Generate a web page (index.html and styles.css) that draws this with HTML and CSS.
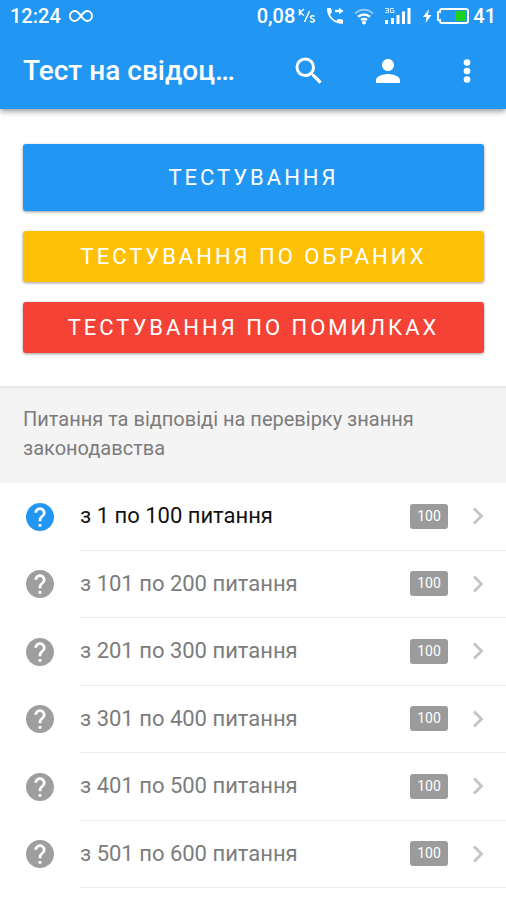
FILE: index.html
```html
<!DOCTYPE html>
<html lang="uk">
<head>
<meta charset="utf-8">
<meta name="viewport" content="width=device-width, initial-scale=1">
<title>Тест</title>
<link rel="stylesheet" href="styles.css">
</head>
<body>
<svg class="sprite">
  <symbol id="help" viewBox="2 2 20 20"><path d="M12 2C6.480 2 2 6.480 2 12s4.480 10 10 10 10-4.480 10-10S17.520 2 12 2zm1 17h-2v-2h2v2zm2.070-7.750l-.9.920C13.450 12.900 13 13.500 13 15h-2v-.5c0-1.100.45-2.100 1.170-2.830l1.240-1.260c.37-.36.59-.86.59-1.410 0-1.100-.9-2-2-2s-2 .9-2 2H8c0-2.210 1.790-4 4-4s4 1.790 4 4c0 .88-.36 1.680-.93 2.250z"/></symbol>
  <symbol id="chevron" viewBox="0 0 12 18"><path d="M2 1.500 9.500 9 2 16.500" fill="none" stroke="currentColor" stroke-width="2.800"/></symbol>
</svg>
<header class="top">
  <div class="status">
    <span class="clock">12:24</span>
    <svg class="infinity" viewBox="0 0 24 14"><path d="M12 7C9.500 3.500 8 2 5.800 2a4.800 5 0 0 0 0 10C8 12 9.500 10.500 12 7s4-5 6.200-5a4.800 5 0 0 1 0 10C16 12 14.500 10.500 12 7z" fill="none" stroke="currentColor" stroke-width="2"/></svg>
    <span class="speed">0,08</span>
    <svg class="unit" viewBox="0 0 18 16"><path d="M1.500 1v6.500M6 1 2 4.500l4 3M11.500 3 6.500 14M16.500 8.500c-1-1-4-1-4 .8 0 2 4 1.200 4 3.200 0 1.900-3.300 1.900-4.400.6" fill="none" stroke="currentColor" stroke-width="1.500"/></svg>
    <svg class="call" viewBox="0 0 18 18"><path d="M1 2C1 1.300 1.300 1 2 1h2.300c.5 0 .9.300 1 .9l.5 3c.1.500-.1.800-.4 1.100L4 7.500c1.200 2.700 3.500 5 6.300 6.300l1.700-1.500c.3-.3.700-.4 1.100-.3l3 .6c.6.100.9.500.9 1v2.300c0 .6-.4.900-1 .9C8 17 1 10 1 2z"/><path d="M9 4h5" fill="none" stroke="currentColor" stroke-width="2.400"/><path d="M13 .8 17.500 4 13 7.200z"/></svg>
    <svg class="wifi" viewBox="0 0 20 18"><path d="M1 6.500c5.500-5 12.500-5 18 0" fill="none" stroke="currentColor" stroke-width="2" opacity=".5"/><path d="M4 9.800c4-3.200 8-3.200 12 0M7 13c2-1.500 4-1.500 6 0" fill="none" stroke="currentColor" stroke-width="2.400"/><circle cx="10" cy="15.500" r="2"/></svg>
    <svg class="signal" viewBox="0 0 27 18"><path d="M1 13h3v4H1zM7 11h3v6H7zM12.500 8h3v9h-3zM18 4.500h3V17h-3zM23.500 1h3v16h-3z"/><path d="M1 1.500h3.500v4H1M2 3.500h2.500M10 1.500H6.500v4H10v-2H8.500" fill="none" stroke="currentColor" opacity=".8"/></svg>
    <svg class="battery" viewBox="0 0 46 18"><path d="M6 2 0 10h3.500L2.500 16l6-8H5z"/><path d="M19 2h24a2 2 0 0 1 2 2v10a2 2 0 0 1-2 2H19a2 2 0 0 1-2-2v-1h-2V5h2V4a2 2 0 0 1 2-2z" fill="none" stroke="currentColor" stroke-width="2"/><path class="charge" d="M32 4h11v10H32z"/></svg>
    <span>41</span>
  </div>
  <div class="toolbar">
    <h1>Тест на свідоц…</h1>
    <button aria-label="Пошук"><svg viewBox="2 2 20 20"><path d="M15.500 14h-.79l-.28-.27A6.471 6.471 0 0 0 16 9.500 6.500 6.500 0 1 0 9.500 16c1.610 0 3.090-.59 4.230-1.570l.27.28v.79l5 4.990L20.490 19l-4.990-5zm-6 0C7.010 14 5 11.990 5 9.500S7.010 5 9.500 5 14 7.010 14 9.500 11.990 14 9.500 14z"/></svg></button>
    <button aria-label="Профіль"><svg viewBox="2 2 20 20"><path d="M12 12c2.210 0 4-1.790 4-4s-1.790-4-4-4-4 1.790-4 4 1.790 4 4 4zm0 2c-2.670 0-8 1.340-8 4v2h16v-2c0-2.660-5.330-4-8-4z"/></svg></button>
    <button aria-label="Меню"><svg viewBox="2 2 20 20"><circle cx="12" cy="6.300" r="2.200"/><circle cx="12" cy="12" r="2.200"/><circle cx="12" cy="17.700" r="2.200"/></svg></button>
  </div>
</header>
<main>
  <div class="actions">
    <button class="action primary">ТЕСТУВАННЯ</button>
    <button class="action chosen">ТЕСТУВАННЯ ПО ОБРАНИХ</button>
    <button class="action mistakes">ТЕСТУВАННЯ ПО ПОМИЛКАХ</button>
  </div>
  <h2>Питання та відповіді на перевірку знання законодавства</h2>
  <ul class="list">
    <li><a class="current" href="#1"><svg class="help"><use href="#help"/></svg><span class="body"><span class="name">з 1 по 100 питання</span><span class="badge">100</span><svg class="chevron"><use href="#chevron"/></svg></span></a></li>
    <li><a href="#101"><svg class="help"><use href="#help"/></svg><span class="body"><span class="name">з 101 по 200 питання</span><span class="badge">100</span><svg class="chevron"><use href="#chevron"/></svg></span></a></li>
    <li><a href="#201"><svg class="help"><use href="#help"/></svg><span class="body"><span class="name">з 201 по 300 питання</span><span class="badge">100</span><svg class="chevron"><use href="#chevron"/></svg></span></a></li>
    <li><a href="#301"><svg class="help"><use href="#help"/></svg><span class="body"><span class="name">з 301 по 400 питання</span><span class="badge">100</span><svg class="chevron"><use href="#chevron"/></svg></span></a></li>
    <li><a href="#401"><svg class="help"><use href="#help"/></svg><span class="body"><span class="name">з 401 по 500 питання</span><span class="badge">100</span><svg class="chevron"><use href="#chevron"/></svg></span></a></li>
    <li><a href="#501"><svg class="help"><use href="#help"/></svg><span class="body"><span class="name">з 501 по 600 питання</span><span class="badge">100</span><svg class="chevron"><use href="#chevron"/></svg></span></a></li>
  </ul>
</main>
</body>
</html>
```
FILE: styles.css
```css
* { box-sizing: border-box; }
body {
  margin: 0;
  background: #fff;
  color: #7c7c7c;
  font-family: Roboto, "Liberation Sans", sans-serif;
}
svg { flex: none; fill: currentColor; }
button { border: 0; font: inherit; color: inherit; cursor: pointer; }
.sprite { display: none; }

.top {
  background: #2196f3;
  color: #fff;
  box-shadow: 0 2px 6px rgba(0, 0, 0, .45);
}
.status {
  display: flex;
  align-items: center;
  height: 32px;
  padding: 0 10px;
  font-size: 20px;
  font-weight: 500;
}
.infinity { width: 24px; height: 14px; margin-left: 8px; }
.speed { margin-left: auto; }
.unit { width: 18px; height: 16px; margin-left: 3px; }
.call { width: 18px; height: 18px; margin-left: 10px; }
.wifi { width: 20px; height: 18px; margin-left: 10px; }
.signal { width: 27px; height: 18px; margin-left: 10px; }
.battery { width: 46px; height: 18px; margin: 0 4px 0 12px; }
.charge { fill: #1fd01f; }

.toolbar {
  display: flex;
  align-items: center;
  height: 77px;
  padding: 0 0 0 23px;
}
h1 {
  flex: 1;
  margin: 0;
  font-size: 28px;
  font-weight: 500;
  line-height: 36px;
  white-space: nowrap;
}
.toolbar button {
  display: flex;
  justify-content: center;
  width: 79px;
  padding: 10px 0;
  background: none;
}
.toolbar svg { width: 30px; height: 30px; }

.actions {
  display: grid;
  gap: 20px;
  padding: 35px 22px 33px 23px;
}
.action {
  padding: 10px 0;
  border-radius: 3px;
  color: #fff;
  font-size: 22px;
  line-height: 31px;
  letter-spacing: 3px;
  box-shadow: 0 1px 3px rgba(0, 0, 0, .4);
}
.primary { padding: 18px 0; background: #2196f3; }
.chosen { background: #ffc107; }
.mistakes { background: #f44336; }

h2 {
  margin: 0;
  padding: 17px 80px 20px 23px;
  border-top: 2px solid #e8e8e8;
  background: #f4f4f4;
  font-size: 20px;
  font-weight: 400;
  line-height: 29px;
}

.list {
  display: grid;
  grid-auto-rows: 1fr;
  min-height: 405px;
  margin: 0;
  padding: 0;
  list-style: none;
}
.list a {
  display: flex;
  align-items: center;
  height: 100%;
  padding-left: 26px;
  color: inherit;
  text-decoration: none;
}
.help { width: 28px; height: 28px; margin-right: 26px; color: #9e9e9e; }
.body {
  display: flex;
  flex: 1;
  align-items: center;
  align-self: stretch;
  padding-right: 22px;
  border-bottom: 1px solid #ebebeb;
}
.name { flex: 1; font-size: 22px; line-height: 28px; }
.current .name { color: #111; }
.current .help { color: #2196f3; }
.badge {
  min-width: 38px;
  padding: 2px 6px;
  border-radius: 3px;
  background: #9b9b9b;
  color: #fff;
  font-size: 14px;
  line-height: 21px;
  text-align: center;
}
.chevron { width: 12px; height: 18px; margin-left: 24px; color: #c4c4c4; }
```
